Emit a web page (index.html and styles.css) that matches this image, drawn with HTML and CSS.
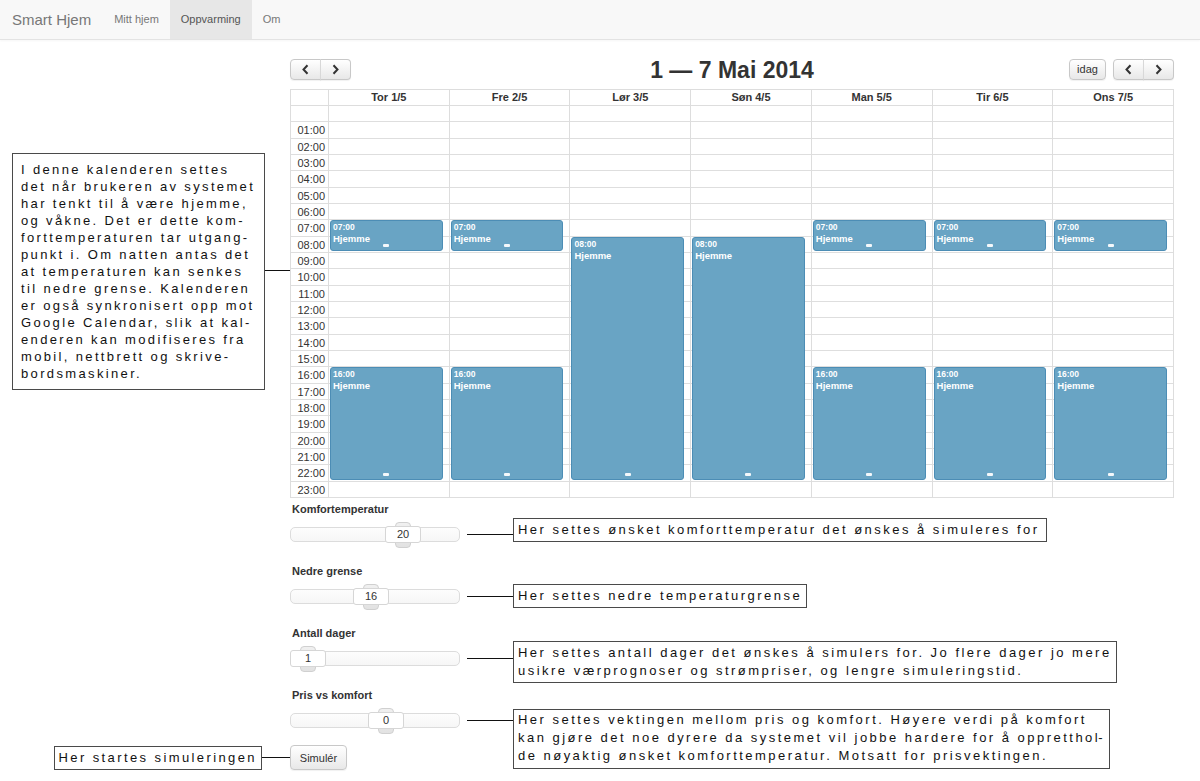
FILE: index.html
```html
<!DOCTYPE html>
<html lang="no">
<head>
<meta charset="utf-8">
<title>Smart Hjem – Oppvarming</title>
<link rel="stylesheet" href="styles.css">
</head>
<body>
<nav class="navbar">
  <span class="brand">Smart Hjem</span>
  <ul class="nav">
    <li><a>Mitt hjem</a></li>
    <li class="active"><a>Oppvarming</a></li>
    <li><a>Om</a></li>
  </ul>
</nav>

<main class="page">
  <div class="top">
    <div class="annot-left">
      <div class="note note-big">I denne kalenderen settes<br>det når brukeren av systemet<br>har tenkt til å være hjemme,<br>og våkne. Det er dette kom-<br>forttemperaturen tar utgang-<br>punkt i. Om natten antas det<br>at temperaturen kan senkes<br>til nedre grense. Kalenderen<br>er også synkronisert opp mot<br>Google Calendar, slik at kal-<br>enderen kan modifiseres fra<br>mobil, nettbrett og skrive-<br>bordsmaskiner.</div>
      <span class="wire wire-left"></span>
    </div>

    <section class="calendar">
      <div class="toolbar">
        <div class="tb-left">
          <div class="btn-group">
            <button class="btn btn-arrow" type="button"><svg width="7" height="11" viewBox="0 0 7 11"><polyline points="5.5,1.2 1.5,5.5 5.5,9.8" fill="none" stroke="#333" stroke-width="2"/></svg></button>
            <button class="btn btn-arrow" type="button"><svg width="7" height="11" viewBox="0 0 7 11"><polyline points="1.5,1.2 5.5,5.5 1.5,9.8" fill="none" stroke="#333" stroke-width="2"/></svg></button>
          </div>
        </div>
        <h2 class="cal-title">1 — 7 Mai 2014</h2>
        <div class="tb-right">
          <button class="btn btn-today" type="button">idag</button>
          <div class="btn-group">
            <button class="btn btn-arrow" type="button"><svg width="7" height="11" viewBox="0 0 7 11"><polyline points="5.5,1.2 1.5,5.5 5.5,9.8" fill="none" stroke="#333" stroke-width="2"/></svg></button>
            <button class="btn btn-arrow" type="button"><svg width="7" height="11" viewBox="0 0 7 11"><polyline points="1.5,1.2 5.5,5.5 1.5,9.8" fill="none" stroke="#333" stroke-width="2"/></svg></button>
          </div>
        </div>
      </div>

      <div class="cal">
        <div class="cal-head">
          <div class="axis"></div>
          <div class="dh">Tor 1/5</div>
          <div class="dh">Fre 2/5</div>
          <div class="dh">Lør 3/5</div>
          <div class="dh">Søn 4/5</div>
          <div class="dh">Man 5/5</div>
          <div class="dh">Tir 6/5</div>
          <div class="dh">Ons 7/5</div>
        </div>
        <div class="cal-body">
          <div class="times">
            <div></div><div>01:00</div><div>02:00</div><div>03:00</div><div>04:00</div><div>05:00</div><div>06:00</div><div>07:00</div><div>08:00</div><div>09:00</div><div>10:00</div><div>11:00</div><div>12:00</div><div>13:00</div><div>14:00</div><div>15:00</div><div>16:00</div><div>17:00</div><div>18:00</div><div>19:00</div><div>20:00</div><div>21:00</div><div>22:00</div><div>23:00</div>
          </div>
          <div class="day">
            <div class="ev" style="--s:7;--d:2"><span class="ev-time">07:00</span><span class="ev-title">Hjemme</span><i class="ev-grip"></i></div>
            <div class="ev" style="--s:16;--d:7"><span class="ev-time">16:00</span><span class="ev-title">Hjemme</span><i class="ev-grip"></i></div>
          </div>
          <div class="day">
            <div class="ev" style="--s:7;--d:2"><span class="ev-time">07:00</span><span class="ev-title">Hjemme</span><i class="ev-grip"></i></div>
            <div class="ev" style="--s:16;--d:7"><span class="ev-time">16:00</span><span class="ev-title">Hjemme</span><i class="ev-grip"></i></div>
          </div>
          <div class="day">
            <div class="ev" style="--s:8;--d:15"><span class="ev-time">08:00</span><span class="ev-title">Hjemme</span><i class="ev-grip"></i></div>
          </div>
          <div class="day">
            <div class="ev" style="--s:8;--d:15"><span class="ev-time">08:00</span><span class="ev-title">Hjemme</span><i class="ev-grip"></i></div>
          </div>
          <div class="day">
            <div class="ev" style="--s:7;--d:2"><span class="ev-time">07:00</span><span class="ev-title">Hjemme</span><i class="ev-grip"></i></div>
            <div class="ev" style="--s:16;--d:7"><span class="ev-time">16:00</span><span class="ev-title">Hjemme</span><i class="ev-grip"></i></div>
          </div>
          <div class="day">
            <div class="ev" style="--s:7;--d:2"><span class="ev-time">07:00</span><span class="ev-title">Hjemme</span><i class="ev-grip"></i></div>
            <div class="ev" style="--s:16;--d:7"><span class="ev-time">16:00</span><span class="ev-title">Hjemme</span><i class="ev-grip"></i></div>
          </div>
          <div class="day">
            <div class="ev" style="--s:7;--d:2"><span class="ev-time">07:00</span><span class="ev-title">Hjemme</span><i class="ev-grip"></i></div>
            <div class="ev" style="--s:16;--d:7"><span class="ev-time">16:00</span><span class="ev-title">Hjemme</span><i class="ev-grip"></i></div>
          </div>
        </div>
      </div>
    </section>
  </div>

  <form class="controls">
    <div class="field">
      <label class="field-label">Komfortemperatur</label>
      <div class="slider-row">
        <div class="slider"><div class="track"></div><div class="handle" style="--pos:95px"><span class="knob"></span><span class="val">20</span></div></div>
        <span class="wire wire-field"></span>
        <div class="note note-r note-r1">Her settes ønsket komforttemperatur det ønskes å simuleres for</div>
      </div>
    </div>
    <div class="field">
      <label class="field-label">Nedre grense</label>
      <div class="slider-row">
        <div class="slider"><div class="track"></div><div class="handle" style="--pos:63px"><span class="knob"></span><span class="val">16</span></div></div>
        <span class="wire wire-field"></span>
        <div class="note note-r note-r2">Her settes nedre temperaturgrense</div>
      </div>
    </div>
    <div class="field">
      <label class="field-label">Antall dager</label>
      <div class="slider-row">
        <div class="slider"><div class="track"></div><div class="handle" style="--pos:0px"><span class="knob"></span><span class="val">1</span></div></div>
        <span class="wire wire-field"></span>
        <div class="note note-r note-r3">Her settes antall dager det ønskes å simulers for. Jo flere dager jo mere<br>usikre værprognoser og strømpriser, og lengre simuleringstid.</div>
      </div>
    </div>
    <div class="field field-last">
      <label class="field-label">Pris vs komfort</label>
      <div class="slider-row">
        <div class="slider"><div class="track"></div><div class="handle" style="--pos:78px"><span class="knob"></span><span class="val">0</span></div></div>
        <span class="wire wire-field"></span>
        <div class="note note-r note-r4">Her settes vektingen mellom pris og komfort. Høyere verdi på komfort<br>kan gjøre det noe dyrere da systemet vil jobbe hardere for å opprettho<span class="nols">l</span>-<br>de nøyaktig ønsket komforttemperatur. Motsatt for prisvektingen.</div>
      </div>
    </div>
    <div class="annot-run">
      <div class="note note-run">Her startes simuleringen</div>
      <span class="wire wire-run"></span>
    </div>
    <div class="run-cell">
      <button class="btn btn-run" type="button">Simulér</button>
    </div>
  </form>
</main>
</body>
</html>
```

FILE: styles.css
```css
* { box-sizing: border-box; }

html, body {
  margin: 0;
  padding: 0;
  background: #fff;
}

body {
  font-family: "Liberation Sans", Arial, Helvetica, sans-serif;
  color: #333;
  width: 1200px;
  height: 781px;
  overflow: hidden;
}

/* ---------- navbar ---------- */
.navbar {
  height: 40px;
  display: flex;
  align-items: stretch;
  background: #f8f8f8;
  border-bottom: 1px solid #e3e3e3;
  box-shadow: 0 1px 2px rgba(0, 0, 0, 0.04);
}

.brand {
  padding: 0 12px;
  font-size: 15px;
  line-height: 39px;
  color: #777;
}

.nav {
  list-style: none;
  margin: 0;
  padding: 0;
  display: flex;
}

.nav a {
  display: block;
  padding: 0 11px;
  font-size: 11px;
  line-height: 39px;
  color: #777;
}

.nav .active a {
  background: #e7e7e7;
  color: #555;
}

/* ---------- top area ---------- */
.top {
  display: flex;
  align-items: flex-start;
  padding-top: 17px;
}

.annot-left {
  width: 290px;
  flex: none;
  display: flex;
  align-items: center;
  margin-top: 96px;
  padding-left: 12px;
}

.wire {
  display: block;
  height: 1px;
  background: #111;
  flex: none;
}

.wire-left { width: 25px; margin-top: -3px; }

/* ---------- callout notes ---------- */
.note {
  border: 1px solid #4a4a4a;
  background: #fff;
  color: #111;
  font-family: "Liberation Sans", Arial, sans-serif;
  font-size: 13px;
  letter-spacing: 2.35px;
  line-height: 18px;
  white-space: nowrap;
  padding: 2px 4px 2px 4px;
  flex: none;
}

.note-r { letter-spacing: 2.48px; }

.nols { letter-spacing: 0.5px; }

.note-big {
  width: 253px;
  line-height: 17px;
  padding: 7px 6px 7px 8px;
}

/* ---------- calendar ---------- */
.calendar {
  width: 884px;
  flex: none;
}

.toolbar {
  display: grid;
  grid-template-columns: 1fr auto 1fr;
  align-items: center;
  height: 22px;
}

.tb-left { display: flex; }

.tb-right {
  display: flex;
  justify-content: flex-end;
  gap: 7px;
}

.cal-title {
  margin: 0;
  font-size: 23px;
  font-weight: bold;
  line-height: 22px;
  color: #333;
  padding-top: 2px;
}

.btn {
  height: 21px;
  border: 1px solid #c8c8c8;
  border-radius: 4px;
  background: linear-gradient(#ffffff, #e8e8e8);
  box-shadow: 0 1px 1px rgba(0, 0, 0, 0.06);
  font-family: "Liberation Sans", Arial, sans-serif;
  font-size: 11px;
  color: #333;
  padding: 0 7px;
  display: flex;
  align-items: center;
  justify-content: center;
}

.btn-group { display: flex; }

.btn-arrow { width: 31px; padding: 0; }

.btn-group .btn-arrow:first-child {
  border-top-right-radius: 0;
  border-bottom-right-radius: 0;
}

.btn-group .btn-arrow:last-child {
  border-top-left-radius: 0;
  border-bottom-left-radius: 0;
  border-left: 1px solid #d8d8d8;
  margin-left: -1px;
}

.btn-today { width: 37px; }

.cal {
  margin-top: 10px;
  border: 1px solid #ddd;
  border-bottom: 0;
}

.cal-head,
.cal-body {
  display: grid;
  grid-template-columns: 37px repeat(7, 1fr);
}

.cal-head {
  height: 16px;
  border-bottom: 1px solid #ddd;
}

.dh {
  border-left: 1px solid #ddd;
  text-align: center;
  font-size: 11px;
  font-weight: bold;
  line-height: 15px;
  color: #333;
}

.cal-body {
  height: 392px;
  background-image: repeating-linear-gradient(
    to bottom,
    transparent 0,
    transparent calc(392px / 24 - 1px),
    #dedede calc(392px / 24 - 1px),
    #dedede calc(392px / 24)
  );
}

.times {
  display: grid;
  grid-template-rows: repeat(24, 1fr);
}

.times div {
  font-size: 11px;
  line-height: 16px;
  text-align: right;
  padding-right: 3px;
  color: #333;
}

.day {
  position: relative;
  border-left: 1px solid #ddd;
}

.ev {
  position: absolute;
  left: 1px;
  right: 6px;
  top: calc(var(--s) * 100% / 24);
  height: calc(var(--d) * 100% / 24 - 2px);
  background: #69a4c4;
  border: 1px solid #4c8db5;
  border-radius: 3px;
  color: #fff;
  padding: 1px 2px 0 2px;
  overflow: hidden;
}

.ev-time {
  display: block;
  font-size: 8.5px;
  font-weight: bold;
  line-height: 11px;
}

.ev-title {
  display: block;
  font-size: 9.5px;
  font-weight: bold;
  line-height: 11px;
}

.ev-grip {
  position: absolute;
  left: 50%;
  bottom: 3px;
  width: 6px;
  height: 3px;
  margin-left: -3px;
  background: #f4f8fb;
  border-radius: 1px;
}

/* ---------- controls ---------- */
.controls {
  display: grid;
  grid-template-columns: 290px 1fr;
  margin-top: 4px;
}

.field {
  grid-column: 2;
  height: 46px;
  margin-bottom: 16px;
}

.field-last { margin-bottom: 0; }

.field-label {
  display: block;
  font-size: 11px;
  font-weight: bold;
  line-height: 14px;
  margin-bottom: 6px;
  margin-left: 2px;
  color: #333;
}

.slider-row {
  display: flex;
  align-items: flex-start;
  height: 26px;
}

.slider {
  position: relative;
  width: 170px;
  height: 26px;
  flex: none;
}

.track {
  margin-top: 5px;
  height: 15px;
  border: 1px solid #dcdcdc;
  border-radius: 5px;
  background: linear-gradient(#fdfdfd, #f6f6f6);
}

.handle {
  position: absolute;
  top: 0;
  left: var(--pos);
  width: 36px;
  height: 26px;
}

.knob {
  position: absolute;
  left: 10px;
  top: 0;
  width: 16px;
  height: 26px;
  border: 1px solid #d0d0d0;
  border-radius: 4px;
  background: linear-gradient(#f0f0f0, #e2e2e2);
}

.val {
  position: absolute;
  left: 0;
  top: 4px;
  width: 36px;
  height: 17px;
  border: 1px solid #d6d6d6;
  border-radius: 3px;
  background: #fff;
  font-size: 11px;
  line-height: 15px;
  text-align: center;
  color: #333;
}

.wire-field {
  width: 46px;
  margin-left: 7px;
  margin-top: 12px;
}

.note-r1 { margin-top: -4px; padding-right: 6px; }
.note-r2 { margin-top: 0; }
.note-r3 { margin-top: -5px; }
.note-r4 { margin-top: 1px; padding-top: 1px; padding-bottom: 3px; }

.annot-run {
  grid-column: 1;
  display: flex;
  justify-content: flex-end;
  align-items: center;
  margin-top: 11px;
}

.note-run { letter-spacing: 2.4px; padding: 2px 4px 2px 4px; }

.wire-run { width: 28px; }

.run-cell {
  grid-column: 2;
  margin-top: 11px;
}

.btn-run {
  height: 25px;
  width: 57px;
  padding: 0;
}
```
